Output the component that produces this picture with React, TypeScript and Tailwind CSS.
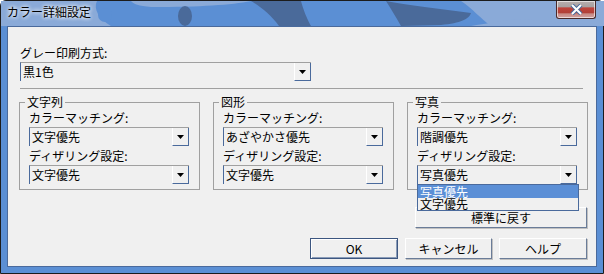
import React from "react";

const FONT = { fontFamily: '"Noto Sans CJK JP", "Noto Sans", sans-serif' };

const Arrow = () => (
	<svg width="7" height="4" viewBox="0 0 7 4">
		<path d="M0 0 H7 L3.5 4 Z" fill="#000" />
	</svg>
);

const Select = ({ value, width }: { value: string; width: string }) => (
	<div className={`flex h-[19px] ${width} border-t border-l border-t-[#a0a0a0] border-l-[#4a6a9c] bg-[#f0f0f0]`}>
		<span className="flex-1 pl-[2px] text-[12px] leading-[17px] text-black">{value}</span>
		<div className="flex w-[17px] items-center justify-center border-r border-b border-l border-r-[#4a6a9c] border-b-[#4a6a9c] border-l-white">
			<Arrow />
		</div>
	</div>
);

const Group = ({
	title,
	match,
	dither,
	popup,
}: {
	title: string;
	match: string;
	dither: string;
	popup?: boolean;
}) => (
	<fieldset className="h-[94px] w-[181px] border border-[#a0a0a0] px-[9px]">
		<legend className="ml-[-4px] px-[2px] text-[12px] leading-[12px]">{title}</legend>
		<div className="mt-[3px] text-[12px] leading-[14px]">カラーマッチング:</div>
		<div className="mt-[2px]">
			<Select value={match} width="w-[160px]" />
		</div>
		<div className="mt-[3px] text-[12px] leading-[14px]">ディザリング設定:</div>
		<div className="relative mt-[2px]">
			<Select value={dither} width="w-[160px]" />
			{popup && (
				<div className="absolute left-0 top-[19px] z-10 w-[162px] border border-[#4a6a9c] bg-[#f0f0f0] text-[12px]">
					<div className="h-[13px] bg-[#5b8fd6] pl-[2px] leading-[13px] text-white">写真優先</div>
					<div className="h-[12px] pl-[2px] leading-[12px] text-black">文字優先</div>
				</div>
			)}
		</div>
	</fieldset>
);

const Button = ({ label, main, width }: { label: string; main?: boolean; width: string }) => (
	<div
		className={`flex h-[21px] ${width} items-center justify-center text-[12px] text-black ${
			main
				? "border border-[#3c5680] bg-[#f0f0f0] shadow-[inset_1px_1px_0_#fff,inset_-1px_-1px_0_#8a9cb8]"
				: "border-t border-l border-r border-b border-t-white border-l-white border-r-[#6a7c98] border-b-[#6a7c98] shadow-[1px_1px_0_#c0c0c0]"
		}`}
	>
		{label}
	</div>
);

const TitleBg = () => (
	<svg className="absolute inset-0" width="604" height="25" viewBox="0 0 604 25">
		<rect width="604" height="25" fill="#5b8fd4" />
		<path d="M0 0 H96 C92 8 98 18 110 25 H0 Z" fill="#8aaad8" />
		<path d="M130 0 H250 C230 4 200 6 150 6 C138 5 132 3 130 0 Z" fill="#8aaad8" />
		<path d="M460 0 H604 V25 H490 C480 18 472 8 460 0 Z" fill="#8aaad8" />
		<circle cx="104" cy="14" r="7" fill="#5b8fd4" />
		<ellipse cx="184" cy="15" rx="7" ry="10" fill="#4a6a9a" />
		<path d="M250 0 H300 C302 8 306 18 310 25 H278 C270 14 260 6 250 0 Z" fill="#4a6a9a" />
		<path d="M385 0 C405 4 440 8 470 12 C468 18 460 22 440 24 L400 25 C395 16 390 8 385 0 Z" fill="#4a6a9a" />
		<path d="M520 18 C540 20 560 22 604 25 H470 C490 22 505 19 520 18 Z" fill="#8aaad8" />
	</svg>
);

const CloseBtn = () => (
	<div className="relative mr-[7px] h-[18px] w-[40px] overflow-hidden rounded-b-[3px] border border-t-0 border-[#4a2a2a] bg-[linear-gradient(#b8aeae_0%,#a8a0a0_35%,#c0443c_40%,#b04038_70%,#c88a84_75%,#d0a0a0_100%)] shadow-[inset_0_0_0_1px_rgba(255,255,255,0.6)]">
		<svg className="absolute left-[13px] top-[3px]" width="13" height="11" viewBox="0 0 13 11">
			<path d="M2 1 L11 10 M11 1 L2 10" stroke="#4a6a9c" strokeWidth="4" />
			<path d="M2 1 L11 10 M11 1 L2 10" stroke="#fff" strokeWidth="2" />
		</svg>
	</div>
);

export default function App() {
	return (
		<div style={FONT} className="h-[274px] w-[604px] overflow-hidden bg-white">
			<div className="flex h-[274px] w-[604px] flex-col rounded-tl-[6px] rounded-tr-[6px] border border-[#1c1c1c] bg-[#5b8fd4]">
				{/* title bar */}
				<div className="relative flex h-[25px] items-start justify-between">
					<TitleBg />
					<span className="relative ml-[6px] mt-[4px] text-[12px] leading-[14px] text-black [text-shadow:0_0_4px_#fff,0_0_4px_#fff]">
						カラー詳細設定
					</span>
					<div className="relative">
						<CloseBtn />
					</div>
				</div>

				{/* client area */}
				<div className="mx-[6px] h-[241px] border border-[#4a6a9c] bg-[#f0f0f0] text-black">
					<div className="flex flex-col pl-[12px]">
						<div className="mt-[19px] text-[12px] leading-[14px]">グレー印刷方式:</div>
						<div className="mt-[2px]">
							<Select value="黒1色" width="w-[291px]" />
						</div>
						<div className="mt-[7px] h-px w-[563px] bg-[#a0a0a0]" />

						<div className="ml-[-1px] mt-[7px] flex gap-[13px]">
							<Group title="文字列" match="文字優先" dither="文字優先" />
							<Group title="図形" match="あざやかさ優先" dither="文字優先" />
							<Group title="写真" match="階調優先" dither="写真優先" popup />
						</div>

						<div className="mt-[17px] flex justify-end pr-[9px]">
							<Button label="標準に戻す" width="w-[172px]" />
						</div>
						<div className="mt-[10px] flex justify-end gap-[7px] pr-[9px]">
							<Button label="OK" main width="w-[88px]" />
							<Button label="キャンセル" width="w-[87px]" />
							<Button label="ヘルプ" width="w-[88px]" />
						</div>
					</div>
				</div>
			</div>
		</div>
	);
}
